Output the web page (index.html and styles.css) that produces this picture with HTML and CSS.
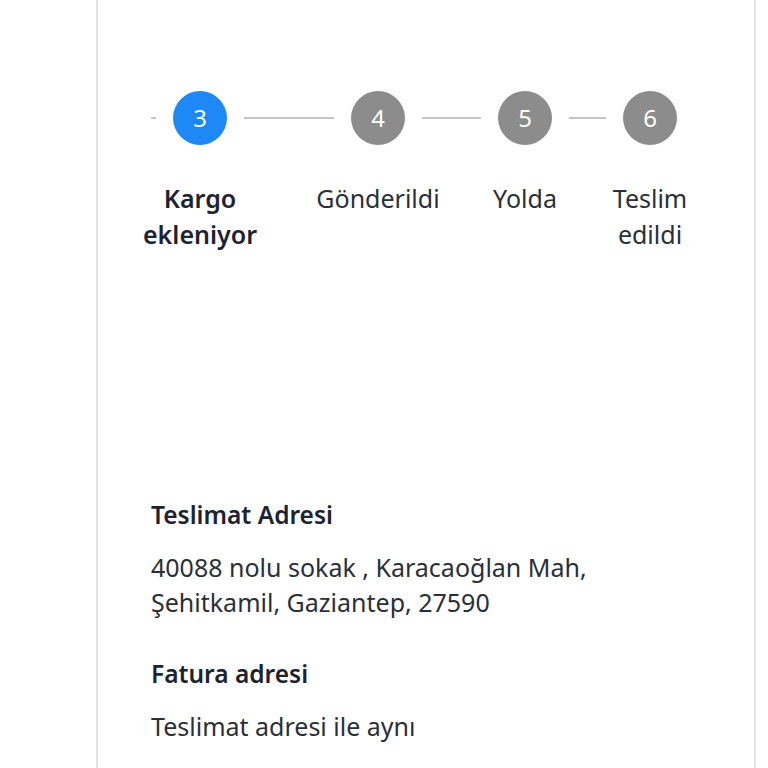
FILE: index.html
```html
<!DOCTYPE html>
<html lang="tr">
<head>
  <meta charset="UTF-8">
  <title>Sipariş Durumu</title>
  <link rel="stylesheet" href="styles.css">
</head>
<body>

  <div class="card">

    <div class="stepper">
      <div class="track">
        <span class="line tick"></span>
        <div class="step">
          <span class="dot active">3</span>
          <span class="label current">Kargo ekleniyor</span>
        </div>
        <span class="line l1"></span>
        <div class="step">
          <span class="dot">4</span>
          <span class="label">Gönderildi</span>
        </div>
        <span class="line l2"></span>
        <div class="step">
          <span class="dot">5</span>
          <span class="label">Yolda</span>
        </div>
        <span class="line l3"></span>
        <div class="step">
          <span class="dot">6</span>
          <span class="label">Teslim edildi</span>
        </div>
      </div>
    </div>

    <section class="address">
      <h4>Teslimat Adresi</h4>
      <p>40088 nolu sokak , Karacaoğlan Mah,<br>Şehitkamil, Gaziantep, 27590</p>
    </section>

    <section class="address">
      <h4>Fatura adresi</h4>
      <p>Teslimat adresi ile aynı</p>
    </section>

  </div>

</body>
</html>
```

FILE: styles.css
```css
body {
  margin: 0;
  background: #fff;
  font-family: "Noto Sans", Lato, sans-serif;
  color: #1d2330;
}
/* === Card === */
.card {
  box-sizing: border-box;
  width: 660px;
  min-height: 768px;
  margin-left: 96px;
  padding: 91px 0 0 53px;
  border-left: 2px solid #e4e4e4;
  border-right: 2px solid #e4e4e4;
}
/* === Stepper === */
.stepper {
  height: 406px;
}
.track {
  display: flex;
  align-items: flex-start;
  gap: 17px;
}
.line {
  height: 2px;
  margin-top: 26px;
  background: #c4c4c4;
}
.line.tick { width: 5px; }
.line.l1 { width: 90px; }
.line.l2 { width: 59px; }
.line.l3 { width: 37px; }
.step {
  width: 54px;
  display: flex;
  flex-direction: column;
  align-items: center;
}
.dot {
  width: 54px;
  height: 54px;
  border-radius: 50%;
  background: #8c8c8c;
  color: #fff;
  font-size: 24px;
  line-height: 54px;
  text-align: center;
}
.dot.active {
  background: #1e88f7;
}
.label {
  flex: none;
  width: 130px;
  margin-top: 35px;
  font-size: 25px;
  line-height: 36px;
  text-align: center;
  color: #2a2f38;
}
.label.current {
  font-weight: 600;
  color: #1d2330;
}
/* === Addresses === */
.address h4 {
  margin: 0;
  font-size: 24.5px;
  line-height: 36px;
  font-weight: 600;
}
.address p {
  margin: 17px 0 36px;
  font-size: 25px;
  line-height: 35px;
  color: #2a2f38;
}
```
